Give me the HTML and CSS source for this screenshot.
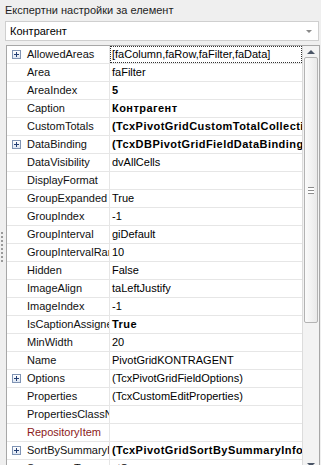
FILE: index.html
```html
<html>
  <head>
    <title>inspector</title>
    <link rel="stylesheet" href="styles.css">
  </head>
  <body>
    <div class="title">Експертни настройки за елемент</div>

    <div class="combo">
      <span class="combo-text">Контрагент</span>
      <span class="combo-arrow"></span>
    </div>

    <div class="editor">
      <div class="grip">
        <div class="dots">
          <i></i><i></i><i></i><i></i><i></i><i></i><i></i><i></i>
        </div>
      </div>

      <div class="grid">
        <div class="rows">
          <div class="row"><div class="name"><span class="plus"></span>AllowedAreas</div><div class="value"><span class="focus">[faColumn,faRow,faFilter,faData]</span></div></div>
          <div class="row"><div class="name">Area</div><div class="value">faFilter</div></div>
          <div class="row"><div class="name">AreaIndex</div><div class="value bold">5</div></div>
          <div class="row"><div class="name">Caption</div><div class="value bold">Контрагент</div></div>
          <div class="row"><div class="name">CustomTotals</div><div class="value bold">(TcxPivotGridCustomTotalCollection)</div></div>
          <div class="row"><div class="name"><span class="plus"></span>DataBinding</div><div class="value bold">(TcxDBPivotGridFieldDataBinding)</div></div>
          <div class="row"><div class="name">DataVisibility</div><div class="value">dvAllCells</div></div>
          <div class="row"><div class="name">DisplayFormat</div><div class="value"></div></div>
          <div class="row"><div class="name">GroupExpanded</div><div class="value">True</div></div>
          <div class="row"><div class="name">GroupIndex</div><div class="value">-1</div></div>
          <div class="row"><div class="name">GroupInterval</div><div class="value">giDefault</div></div>
          <div class="row"><div class="name">GroupIntervalRange</div><div class="value">10</div></div>
          <div class="row"><div class="name">Hidden</div><div class="value">False</div></div>
          <div class="row"><div class="name">ImageAlign</div><div class="value">taLeftJustify</div></div>
          <div class="row"><div class="name">ImageIndex</div><div class="value">-1</div></div>
          <div class="row"><div class="name">IsCaptionAssigned</div><div class="value bold">True</div></div>
          <div class="row"><div class="name">MinWidth</div><div class="value">20</div></div>
          <div class="row"><div class="name">Name</div><div class="value">PivotGridKONTRAGENT</div></div>
          <div class="row"><div class="name"><span class="plus"></span>Options</div><div class="value">(TcxPivotGridFieldOptions)</div></div>
          <div class="row"><div class="name">Properties</div><div class="value">(TcxCustomEditProperties)</div></div>
          <div class="row"><div class="name">PropertiesClassName</div><div class="value"></div></div>
          <div class="row"><div class="name repo">RepositoryItem</div><div class="value"></div></div>
          <div class="row"><div class="name"><span class="plus"></span>SortBySummaryInfo</div><div class="value bold">(TcxPivotGridSortBySummaryInfo)</div></div>
          <div class="row"><div class="name">SummaryType</div><div class="value">stSum</div></div>
        </div>

        <div class="scroll">
          <div class="scroll-btn"><span class="arrow-up"></span></div>
          <div class="thumb"><span class="thumb-grip"></span></div>
          <div class="track"></div>
          <div class="scroll-btn"><span class="arrow-down"></span></div>
        </div>
      </div>
    </div>
  </body>
</html>
```

FILE: styles.css
```css
body {
    margin: 0;
    width: 321px;
    height: 465px;
    overflow: hidden;
    background-color: #efefef;
    font-family: "Liberation Sans", Arial, sans-serif;
    font-size: 11px;
    color: #000;
}

.title {
    height: 21px;
    padding-left: 5px;
    line-height: 20px;
    color: #1e1e1e;
}

.combo {
    display: flex;
    align-items: center;
    justify-content: space-between;
    height: 18px;
    margin: 0 2px 0 5px;
    padding: 0 6px 0 4px;
    background-color: #fff;
    border: 1px solid #cfcfcf;
}

.combo-arrow {
    width: 0;
    height: 0;
    border-left: 3px solid transparent;
    border-right: 3px solid transparent;
    border-top: 3px solid #8a8a8a;
}

.editor {
    display: flex;
    margin-top: 4px;
}

.grip {
    width: 6px;
    display: flex;
    align-items: flex-start;
    padding-top: 187px;
}

.dots {
    display: flex;
    flex-direction: column;
    gap: 2px;
    margin-left: 1px;
}

.dots i {
    display: block;
    width: 2px;
    height: 2px;
    background-color: #9a9a9a;
}

.grid {
    display: flex;
    width: 312px;
    height: 440px;
    background-color: #fff;
    border: 1px solid #a7a7a7;
}

.rows {
    flex: 1;
    overflow: hidden;
}

.row {
    display: flex;
    height: 17px;
    line-height: 17px;
    border-bottom: 1px solid #e6e6e6;
}

.name {
    position: relative;
    width: 82px;
    padding-left: 20px;
    border-right: 1px solid #e6e6e6;
    white-space: nowrap;
    overflow: hidden;
    color: #111;
}

.name.repo {
    color: #8b1a1a;
}

.plus {
    position: absolute;
    left: 5px;
    top: 4px;
    width: 7px;
    height: 7px;
    border: 1px solid #8094b4;
    background: linear-gradient(#ffffff, #dde6f3);
}

.plus::before,
.plus::after {
    content: "";
    position: absolute;
    background-color: #243f74;
}

.plus::before {
    left: 1px;
    top: 3px;
    width: 5px;
    height: 1px;
}

.plus::after {
    left: 3px;
    top: 1px;
    width: 1px;
    height: 5px;
}

.value {
    flex: 1;
    padding-left: 2px;
    white-space: nowrap;
    overflow: hidden;
}

.value.bold {
    font-weight: bold;
    letter-spacing: 0.45px;
}

.focus {
    display: inline-block;
    width: 189px;
    height: 15px;
    line-height: 15px;
    margin-left: -2px;
    padding-left: 1px;
    border: 1px dotted #333;
}

.scroll {
    width: 16px;
    display: flex;
    flex-direction: column;
    background-color: #f3f3f3;
    border-left: 1px solid #dcdcdc;
}

.scroll-btn {
    height: 11px;
    display: flex;
    align-items: center;
    justify-content: center;
}

.scroll-btn:last-child {
    height: 23px;
    align-items: flex-start;
    padding-top: 4px;
}

.arrow-up {
    width: 0;
    height: 0;
    border-left: 4px solid transparent;
    border-right: 4px solid transparent;
    border-bottom: 4px solid #4a5566;
}

.arrow-down {
    width: 0;
    height: 0;
    border-left: 4px solid transparent;
    border-right: 4px solid transparent;
    border-top: 4px solid #4a5566;
}

.thumb {
    height: 264px;
    margin: 0 1px;
    display: flex;
    align-items: center;
    justify-content: center;
    border: 1px solid #b3b3b3;
    border-radius: 2px;
    background: linear-gradient(to right, #fbfbfb, #e9e9e9);
}

.thumb-grip {
    width: 6px;
    height: 5px;
    border-top: 1px solid #8c8c8c;
    border-bottom: 1px solid #8c8c8c;
    background: linear-gradient(#fff 0, #fff 2px, #8c8c8c 2px, #8c8c8c 3px, #fff 3px);
}

.track {
    flex: 1;
}
```
